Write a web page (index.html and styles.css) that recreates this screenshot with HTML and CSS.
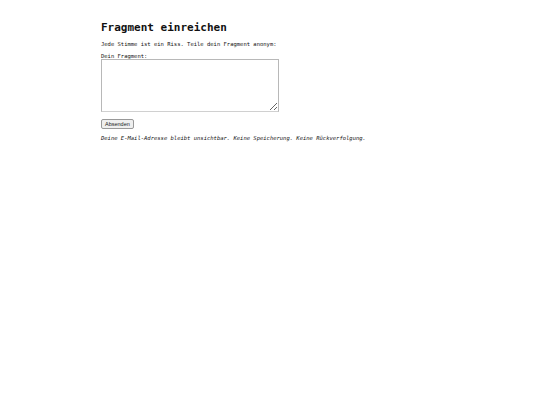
FILE: index.html
```html
<!DOCTYPE html>
<html lang="de">
<head>
<meta charset="utf-8">
<title>Fragment einreichen</title>
<link rel="stylesheet" href="styles.css">
</head>
<body>
<main class="page">
  <h1 class="title">Fragment einreichen</h1>
  <p class="intro">Jede Stimme ist ein Riss. Teile dein Fragment anonym:</p>
  <form class="form">
    <label class="label" for="frag">Dein Fragment:</label>
    <textarea id="frag" class="area"></textarea>
    <button type="button" class="btn">Absenden</button>
  </form>
  <p class="note">Deine E-Mail-Adresse bleibt unsichtbar. Keine Speicherung. Keine Rückverfolgung.</p>
</main>
</body>
</html>
```
FILE: styles.css
```css
html, body {
  margin: 0;
  padding: 0;
  background: #fff;
}
body {
  font-family: "DejaVu Sans Mono", monospace;
  color: #111;
}
.page {
  width: 338px;
  margin: 0 auto;
  padding-top: 20px;
}
.title {
  font-size: 11px;
  font-weight: bold;
  margin: 0 0 5px 0;
  line-height: 16px;
}
.intro {
  font-size: 5.5px;
  margin: 0 0 5px 0;
  line-height: 7px;
}
.form {
  display: flex;
  flex-direction: column;
  align-items: flex-start;
}
.label {
  font-size: 5.5px;
  line-height: 6px;
}
.area {
  width: 178px;
  height: 53px;
  box-sizing: border-box;
  margin: 0;
  border: 1px solid #b8b8b8;
  border-bottom-color: #d0d0d0;
  font-size: 6px;
}
.btn {
  margin-top: 7px;
  font-family: "Liberation Sans", Arial, sans-serif;
  font-size: 5.5px;
  height: 10px;
  padding: 0 3px;
  border: 1px solid #999;
  border-radius: 2px;
  background: #efefef;
  color: #222;
}
.note {
  font-size: 5.5px;
  font-style: italic;
  margin: 6px 0 0 0;
  line-height: 7px;
}
```
